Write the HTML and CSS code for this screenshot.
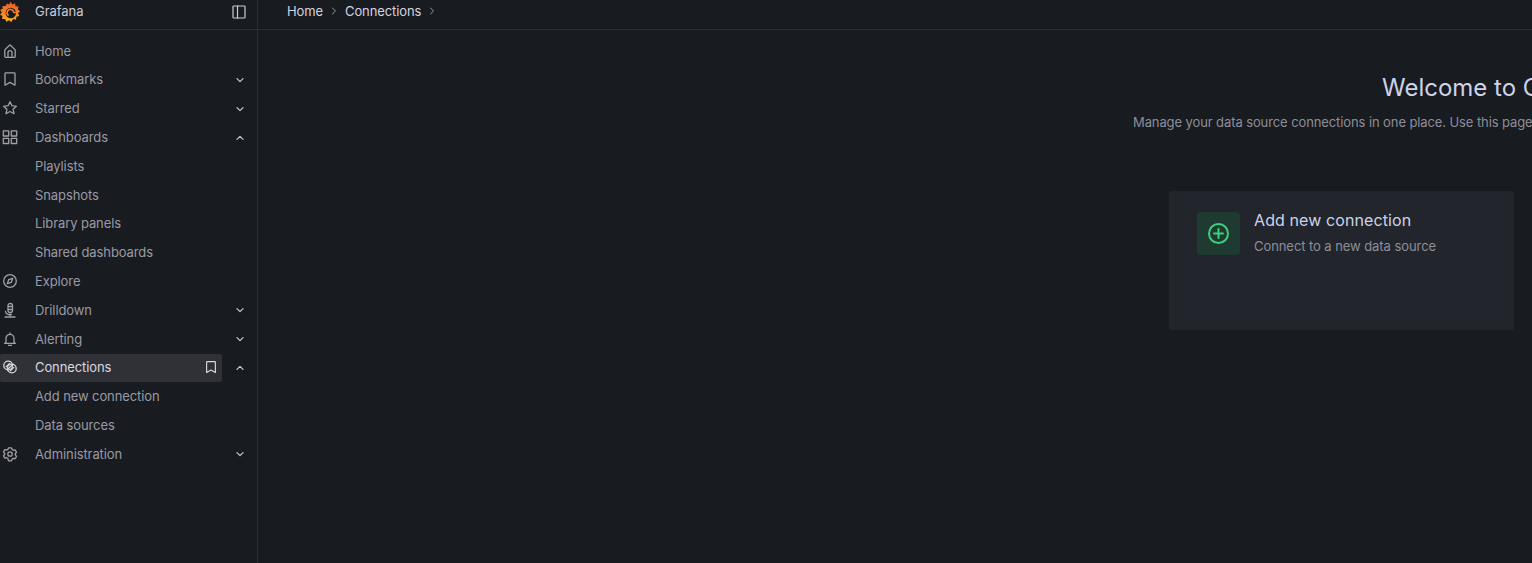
FILE: index.html
```html
<!DOCTYPE html>
<html lang="en">
<head>
    <meta charset="UTF-8">
    <meta name="viewport" content="width=device-width, initial-scale=1.0">
    <title>Connections - Grafana</title>
    <link rel="stylesheet" href="styles.css">
</head>
<body>
    <svg class="sprites" width="0" height="0">
        <defs>
            <linearGradient id="logo-grad" x1="0.5" y1="1" x2="0.5" y2="0">
                <stop offset="0" stop-color="#f9b41e"/>
                <stop offset=".55" stop-color="#f47b24"/>
                <stop offset="1" stop-color="#ef5a28"/>
            </linearGradient>
            <symbol id="i-down" viewBox="0 0 16 16"><path d="M5 6.600 8 9.600 11 6.600"/></symbol>
            <symbol id="i-up" viewBox="0 0 16 16"><path d="M5 9.400 8 6.400 11 9.400"/></symbol>
            <symbol id="i-next" viewBox="0 0 16 16"><path d="M6.500 5 9.500 8 6.500 11"/></symbol>
            <symbol id="i-mark" viewBox="0 0 16 16"><path d="M3.600 1.800h8.800a.6.6 0 0 1 .6.6v11.800L8 11.400 3 14.200V2.400a.6.6 0 0 1 .6-.6z"/></symbol>
        </defs>
    </svg>

    <aside class="sidebar">
        <div class="side-head">
            <svg class="logo" viewBox="0 0 20 22">
                <path fill="url(#logo-grad)" d="M10.800 .8 12.300 3.400 15 2.300 15.500 5.200 18.500 5.600 17.800 8.400 20 10.200 18 12.300 19.300 15 16.400 15.800 16 18.700 13.100 18 11.400 21 9 19.300 6.300 20.800 5.100 18 2.100 18 2.500 15 0 13.600 1.900 11.300 0 8.900 2.700 7.800 2.500 4.900 5.500 5.100 7 2.600 9 3.500z"/>
                <circle class="logo-hole" cx="10.800" cy="12" r="5.200"/>
                <path class="logo-swirl" d="M8.600 14.600a3.400 3.400 0 1 1 5.200-3.300l2.600 .2"/>
            </svg>
            <span class="brand">Grafana</span>
            <svg class="dock" viewBox="0 0 14 14"><rect x="1" y="1" width="12" height="12" rx=".8"/><path d="M5.500 1v12"/></svg>
        </div>

        <nav class="nav">
            <div class="row">
                <a class="link">
                    <svg class="icon" viewBox="0 0 16 16"><path d="M2.800 13.500q0 .8.8.8h8.800q.8 0 .8-.8V6.900L8.500 2.200q-.5-.4-1 0L2.800 6.900zM6 14.300V9.700a2 2 0 0 1 4 0v4.600"/></svg>
                    <span>Home</span>
                </a>
            </div>
            <div class="row">
                <a class="link">
                    <svg class="icon"><use href="#i-mark"/></svg>
                    <span>Bookmarks</span>
                </a>
                <svg class="chev"><use href="#i-down"/></svg>
            </div>
            <div class="row">
                <a class="link">
                    <svg class="icon" viewBox="0 0 16 16"><path d="M8 1.700 9.900 5.700 14.400 6.300 11.100 9.300 12 13.700 8 11.500 4 13.700 4.900 9.300 1.600 6.300 6.100 5.700z"/></svg>
                    <span>Starred</span>
                </a>
                <svg class="chev"><use href="#i-down"/></svg>
            </div>
            <div class="row">
                <a class="link">
                    <svg class="icon" viewBox="0 0 16 16"><rect x="1.300" y="1.800" width="5.400" height="5.200"/><rect x="9.300" y="1.800" width="5.400" height="5.200"/><rect x="1.300" y="9.300" width="5.400" height="5.200"/><rect x="9.300" y="9.300" width="5.400" height="5.200"/></svg>
                    <span>Dashboards</span>
                </a>
                <svg class="chev"><use href="#i-up"/></svg>
            </div>
            <div class="row"><a class="link sub">Playlists</a></div>
            <div class="row"><a class="link sub">Snapshots</a></div>
            <div class="row"><a class="link sub">Library panels</a></div>
            <div class="row"><a class="link sub">Shared dashboards</a></div>
            <div class="row">
                <a class="link">
                    <svg class="icon" viewBox="0 0 16 16"><circle cx="8" cy="8" r="6.300"/><path d="M10.700 5.300 9.300 9.300 5.300 10.700 6.700 6.700z"/></svg>
                    <span>Explore</span>
                </a>
            </div>
            <div class="row">
                <a class="link">
                    <svg class="icon" viewBox="0 0 16 16"><rect x="6" y="1.500" width="4.500" height="9" rx="2"/><path d="M6.500 4.500h3.500M6.500 7.500h3.500M3.500 9.500q.5 2.800 3 3h3M8 12.500v1M3 15h10"/></svg>
                    <span>Drilldown</span>
                </a>
                <svg class="chev"><use href="#i-down"/></svg>
            </div>
            <div class="row">
                <a class="link">
                    <svg class="icon" viewBox="0 0 16 16"><path d="M8 2v1.300M4 11V7.400a4 4 0 0 1 8 0V11l1.300 1.400H2.700zM6.500 14.400h3"/></svg>
                    <span>Alerting</span>
                </a>
                <svg class="chev"><use href="#i-down"/></svg>
            </div>
            <div class="row">
                <a class="link active">
                    <svg class="icon" viewBox="0 0 16 16"><circle cx="6.200" cy="6.500" r="4.400"/><circle cx="9.800" cy="9.500" r="4.400"/><path d="M6.300 9.800 9.900 6.200M4.200 7.800 7.600 4.400M8.400 11.800 11.800 8.400"/></svg>
                    <span>Connections</span>
                    <svg class="pin"><use href="#i-mark"/></svg>
                </a>
                <svg class="chev"><use href="#i-up"/></svg>
            </div>
            <div class="row"><a class="link sub">Add new connection</a></div>
            <div class="row"><a class="link sub">Data sources</a></div>
            <div class="row">
                <a class="link">
                    <svg class="icon" viewBox="0 0 16 16"><circle cx="8" cy="8" r="2.200"/><path d="M6.800 1.800h2.400q.4 0 .5.400l.3 1.300 1.400.8 1.300-.4q.4-.1.6.200l1.100 1.900q.2.400-.1.600l-1 .9v1.600l1 .9q.3.200.1.600l-1.100 1.900q-.2.300-.6.200l-1.300-.4-1.400.8-.3 1.300q-.1.400-.5.400H6.800q-.4 0-.5-.4L6 12.500l-1.400-.8-1.300.4q-.4.100-.6-.2l-1.100-1.900q-.2-.4.100-.6l1-.9V7.300l-1-.9q-.3-.2-.1-.6l1.100-1.900q.2-.3.6-.2l1.300.4L6 3.300l.3-1.100q.1-.4.500-.4z"/></svg>
                    <span>Administration</span>
                </a>
                <svg class="chev"><use href="#i-down"/></svg>
            </div>
        </nav>
    </aside>

    <div class="main">
        <header class="topbar">
            <span>Home</span>
            <svg class="crumb-sep"><use href="#i-next"/></svg>
            <span>Connections</span>
            <svg class="crumb-sep"><use href="#i-next"/></svg>
        </header>

        <section class="hero">
            <h1>Welcome to Connections</h1>
            <p>Manage your data source connections in one place. Use this page to add a new data source or manage your existing connections.</p>
        </section>

        <div class="cards">
            <a class="card">
                <div class="card-icon">
                    <svg viewBox="0 0 25 25"><circle cx="12.500" cy="12.500" r="9.500"/><path d="M12.500 8v9M8 12.500h9"/></svg>
                </div>
                <div>
                    <h2>Add new connection</h2>
                    <p>Connect to a new data source</p>
                </div>
            </a>
        </div>
    </div>
</body>
</html>
```

FILE: styles.css
```css
* {
    box-sizing: border-box;
}
html, body {
    height: 100%;
}
body {
    margin: 0;
    display: flex;
    overflow: hidden;
    background: #181b1f;
    color: #ccccdc;
    font-family: Inter, "Noto Sans", sans-serif;
    font-size: 14px;
}
.sprites {
    position: absolute;
}
svg {
    fill: none;
    stroke: currentColor;
    stroke-linejoin: round;
    stroke-linecap: round;
    flex: none;
}

/* sidebar */
.sidebar {
    width: 258px;
    flex: none;
    border-right: 1px solid #2c2f34;
}
.side-head {
    height: 30px;
    display: flex;
    align-items: center;
    border-bottom: 1px solid #2c2f34;
    color: #ccccdc;
}
.logo {
    width: 20px;
    height: 22px;
    margin-top: -6px;
    stroke: none;
}
.logo-hole {
    fill: #181b1f;
}
.logo-swirl {
    stroke: #f47b24;
    stroke-width: 1.700;
    stroke-linecap: butt;
}
.brand {
    margin-left: 15px;
    font-size: 13px;
    letter-spacing: -.05px;
    margin-top: -7px;
    flex: 1;
}
.dock {
    width: 14px;
    height: 14px;
    margin-right: 11px;
    margin-top: -5px;
    stroke-width: 1.200;
}
.nav {
    padding-top: 6.800px;
}
.row {
    height: 28.800px;
    display: flex;
    align-items: center;
    color: #9a9aa6;
}
.link {
    width: 222px;
    height: 100%;
    padding-bottom: 1px;
    display: flex;
    align-items: center;
    border-radius: 2px;
    font-size: 13px;
    letter-spacing: -.1px;
}
.link span {
    flex: 1;
}
.link.sub {
    padding-left: 35px;
}
.icon {
    width: 16px;
    height: 16px;
    margin: 0 17px 0 2px;
    stroke-width: 1.300;
    color: #a0a0ac;
}
.chev {
    width: 16px;
    height: 16px;
    margin-left: 10px;
    stroke-width: 1.300;
    color: #c4c4d0;
}
.active {
    background: #2f3136;
    color: #d8d8e4;
}
.active .icon {
    color: #d8d8e4;
}
.pin {
    width: 14px;
    height: 14px;
    margin-right: 4px;
    stroke-width: 1.300;
}

/* main area */
.main {
    flex: 1;
    min-width: 0;
}
.topbar {
    height: 30px;
    padding: 0 0 7px 29px;
    display: flex;
    align-items: center;
    border-bottom: 1px solid #2c2f34;
    font-size: 13px;
    letter-spacing: -.1px;
    color: #d4d4e0;
}
.crumb-sep {
    width: 16px;
    height: 16px;
    margin: 0 3px;
    color: #9a9aa6;
}
.hero {
    white-space: nowrap;
}
.hero h1 {
    margin: 42px 0 0 1124px;
    font-size: 24px;
    font-weight: 400;
    line-height: 32px;
    color: #ccd3ea;
}
.hero p {
    margin: 8px 0 0 875px;
    font-size: 13px;
    letter-spacing: -.1px;
    line-height: 20px;
    color: #8e8e9a;
}
.cards {
    margin: 59px 0 0 911px;
}
.card {
    width: 345px;
    height: 139px;
    padding: 21px 28px;
    display: flex;
    gap: 14px;
    background: #22252b;
    border-radius: 2px;
}
.card-icon {
    width: 43px;
    height: 43px;
    display: flex;
    align-items: center;
    justify-content: center;
    background: #1f3a30;
    border-radius: 4px;
    color: #3bd07c;
}
.card-icon svg {
    width: 25px;
    height: 25px;
    stroke-width: 2;
}
.card h2 {
    margin: 0;
    font-size: 16px;
    font-weight: 400;
    letter-spacing: .1px;
    line-height: 17px;
    color: #ccd3ea;
}
.card p {
    margin: 8px 0 0;
    font-size: 13px;
    letter-spacing: -.07px;
    line-height: 18px;
    color: #8e8e9a;
}
```
